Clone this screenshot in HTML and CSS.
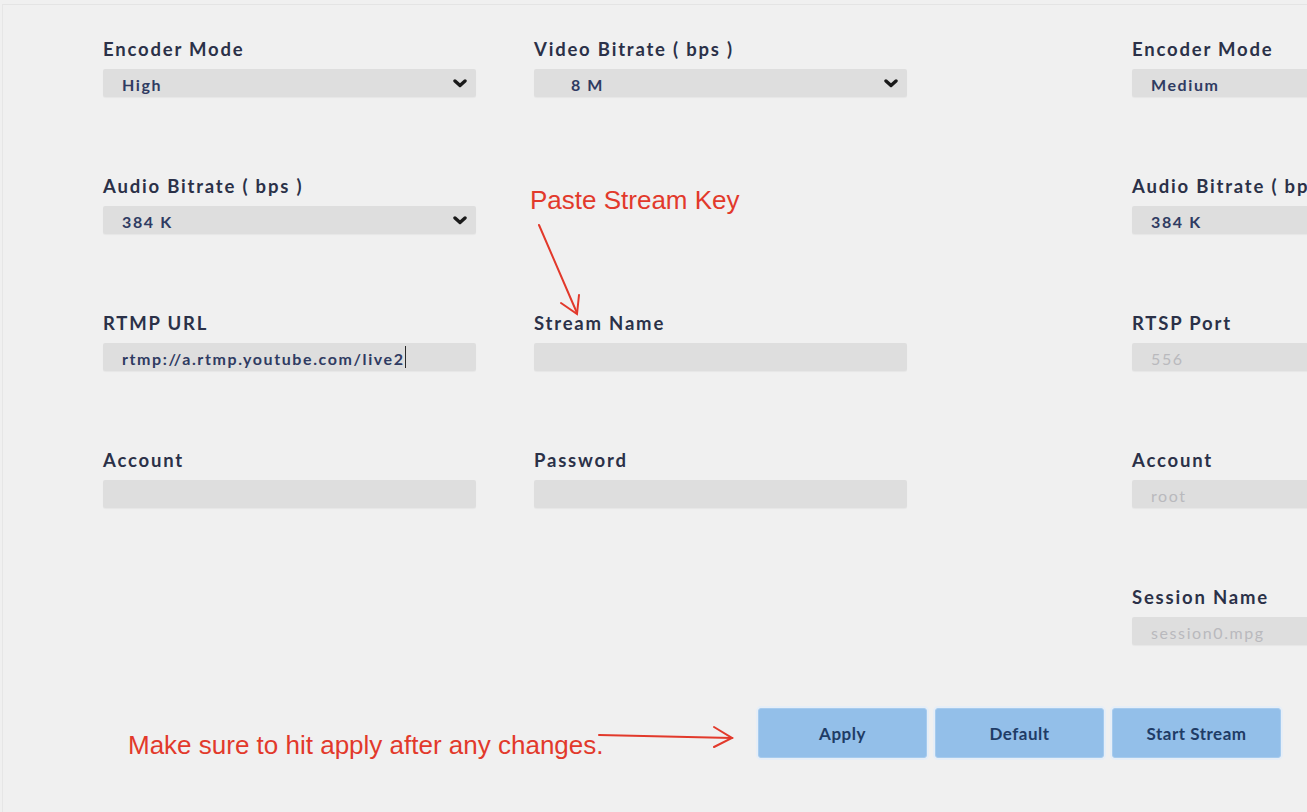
FILE: index.html
```html
<!DOCTYPE html>
<html lang="en">
<head>
<meta charset="utf-8">
<title>Stream Settings</title>
<link rel="stylesheet" href="styles.css">
</head>
<body>
<div class="page">
  <div class="form">
    <div class="block block-left">
      <div class="field">
        <div class="label">Encoder Mode</div>
        <div class="box select"><span class="val">High</span><svg class="chev" viewBox="0 0 14 9"><path d="M2 2 L7 6.5 L12 2"/></svg></div>
      </div>
      <div class="field">
        <div class="label">Video Bitrate ( bps )</div>
        <div class="box select"><span class="val wide">8 M</span><svg class="chev" viewBox="0 0 14 9"><path d="M2 2 L7 6.5 L12 2"/></svg></div>
      </div>
      <div class="field">
        <div class="label">Audio Bitrate ( bps )</div>
        <div class="box select"><span class="val">384 K</span><svg class="chev" viewBox="0 0 14 9"><path d="M2 2 L7 6.5 L12 2"/></svg></div>
      </div>
      <div class="field empty"></div>
      <div class="field">
        <div class="label">RTMP URL</div>
        <div class="box input"><span class="val">rtmp://a.rtmp.youtube.com/live2</span><span class="caret"></span></div>
      </div>
      <div class="field">
        <div class="label">Stream Name</div>
        <div class="box input"></div>
      </div>
      <div class="field">
        <div class="label">Account</div>
        <div class="box input"></div>
      </div>
      <div class="field">
        <div class="label">Password</div>
        <div class="box input"></div>
      </div>
    </div>
    <div class="block block-right">
      <div class="field">
        <div class="label">Encoder Mode</div>
        <div class="box select"><span class="val">Medium</span></div>
      </div>
      <div class="field">
        <div class="label">Audio Bitrate ( bps )</div>
        <div class="box select"><span class="val">384 K</span></div>
      </div>
      <div class="field">
        <div class="label">RTSP Port</div>
        <div class="box input disabled"><span class="val">556</span></div>
      </div>
      <div class="field">
        <div class="label">Account</div>
        <div class="box input disabled"><span class="val">root</span></div>
      </div>
      <div class="field">
        <div class="label">Session Name</div>
        <div class="box input disabled"><span class="val">session0.mpg</span></div>
      </div>
    </div>
  </div>

  <div class="footer">
    <div class="note">Make sure to hit apply after any changes.</div>
    <div class="buttons">
      <button class="btn">Apply</button>
      <button class="btn">Default</button>
      <button class="btn">Start Stream</button>
    </div>
  </div>

  <div class="annot annot-key">Paste Stream Key</div>
  <svg class="arrows" viewBox="0 0 1307 812" width="1307" height="812">
    <g fill="none" stroke="#e2392b" stroke-width="2" stroke-linecap="round">
      <path d="M538 224 L576 312"/>
      <path d="M560 302 L576 313 L578 294"/>
      <path d="M598 734 L731 737"/>
      <path d="M713 726 L731 737 L713 746"/>
    </g>
  </svg>
</div>
</body>
</html>
```

FILE: styles.css
```css
* { box-sizing: border-box; }

html, body {
  margin: 0;
  padding: 0;
  background: #f0f0f0;
  overflow: hidden;
}

.page {
  position: relative;
  width: 1307px;
  height: 812px;
  overflow: hidden;
  border-top: 1px solid #e4e4e4;
  border-left: 1px solid #e6e6e6;
  margin: 4px 0 0 2px;
  font-family: "Lato", "Open Sans", sans-serif;
}

.form {
  display: flex;
  align-items: flex-start;
  gap: 225px;
  padding: 33px 0 0 100px;
}

.block-left {
  display: grid;
  grid-template-columns: 373px 373px;
  grid-auto-rows: 137px;
  column-gap: 58px;
}

.block-right {
  display: flex;
  flex-direction: column;
  width: 373px;
  flex: none;
}

.field {
  height: 137px;
  display: flex;
  flex-direction: column;
}

.block-right .field:last-child { height: auto; }

.label {
  font-size: 18.5px;
  line-height: 22px;
  font-weight: 700;
  color: #2b3148;
  letter-spacing: 1.8px;
}

.box {
  margin-top: 9px;
  height: 28px;
  width: 373px;
  background: #dedede;
  border-radius: 2px;
  box-shadow: 0 1px 1px rgba(0,0,0,0.04);
  display: flex;
  align-items: center;
  padding: 0 9px 0 19px;
  position: relative;
}

.val {
  font-size: 16px;
  font-weight: 700;
  color: #2f3b62;
  letter-spacing: 1.6px;
  line-height: 28px;
  padding-top: 3px;
}

.val.wide { padding-left: 18px; }

.disabled .val {
  color: #b9b9bd;
  font-weight: 400;
}

.caret {
  display: inline-block;
  width: 1px;
  height: 22px;
  background: #2a2a2a;
  margin-left: 0;
}

.select { justify-content: space-between; }

.chev {
  width: 14px;
  height: 9px;
}
.chev path {
  fill: none;
  stroke: #1a1a1a;
  stroke-width: 3.4;
  stroke-linecap: round;
  stroke-linejoin: round;
}

.footer {
  display: flex;
  align-items: flex-start;
  padding: 63px 0 0 125px;
}

.note {
  width: 630px;
  margin-top: 22px;
  font-family: "Liberation Sans", Arial, sans-serif;
  font-size: 26px;
  line-height: 30px;
  color: #e2392b;
  letter-spacing: 0;
}

.buttons {
  display: flex;
  gap: 8px;
}

.btn {
  width: 169px;
  height: 50px;
  border: 1px solid #a6cbee;
  border-radius: 3px;
  background: #93bfe9;
  box-shadow: 0 0 0 2px #e6eef7;
  color: #1f3c66;
  font-family: "Lato", "Open Sans", sans-serif;
  font-size: 17px;
  font-weight: 700;
  padding: 0;
  letter-spacing: 0.5px;
}

.annot {
  position: absolute;
  font-family: "Liberation Sans", Arial, sans-serif;
  font-size: 26px;
  line-height: 30px;
  color: #e2392b;
}

.annot-key {
  left: 527px;
  top: 180px;
}

.arrows {
  position: absolute;
  left: -2px;
  top: -4px;
  pointer-events: none;
}
```
